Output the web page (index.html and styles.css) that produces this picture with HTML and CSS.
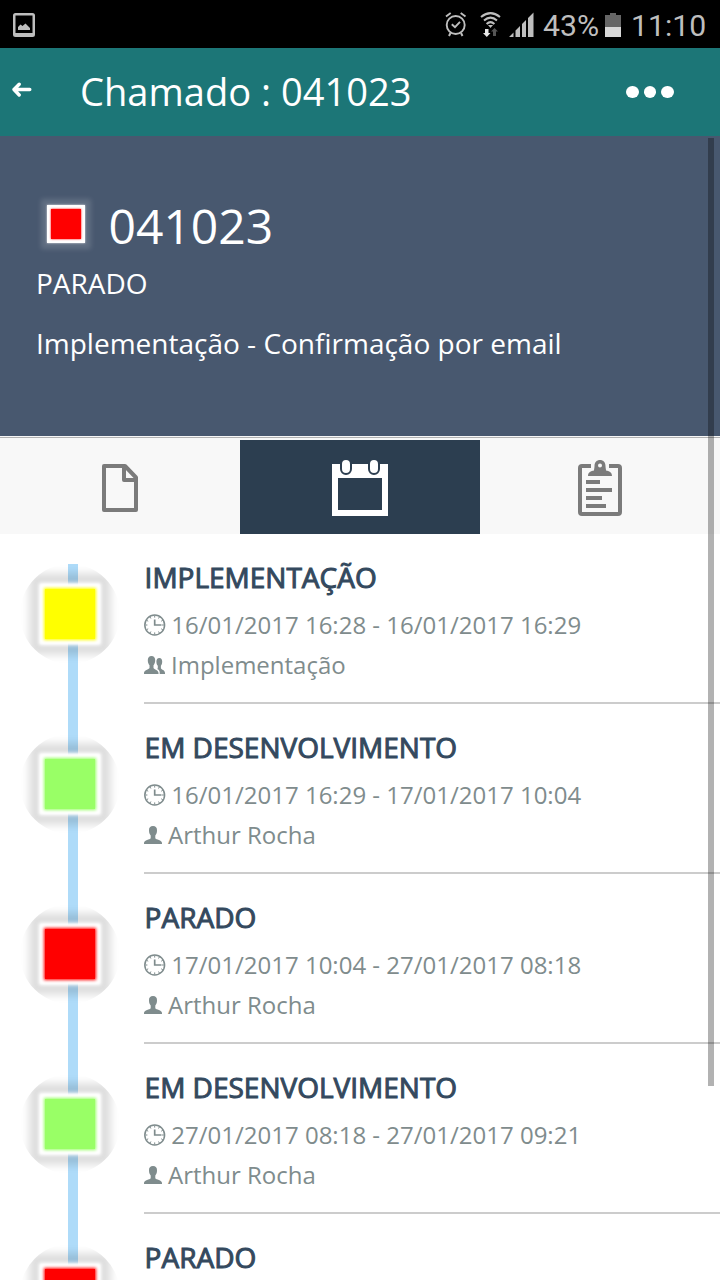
FILE: index.html
```html
<!DOCTYPE html>
<html lang="pt-BR">
<head>
    <meta charset="UTF-8" />
    <meta name="viewport" content="width=device-width, initial-scale=1.0"/>
    <title>Chamado : 041023</title>
    <link rel="stylesheet" href="styles.css">
</head>
<body>

    <svg class="symbols" width="0" height="0">
        <symbol id="clock" viewBox="0 0 22 22">
            <circle cx="10.7" cy="11" r="9.9" fill="none" stroke="currentColor" stroke-width="1.5"/>
            <path d="M10.7 5.5V11H17.5" fill="none" stroke="currentColor" stroke-width="1.7"/>
            <path d="M10.7 1.5V3.6M10.7 18.4V20.5M1.3 11H3.4M18 11H20.1M6 2.9l.9 1.6M2.6 6.3l1.6.9M15.4 2.9l-.9 1.6M18.8 6.3l-1.6.9M6 19.1l.9-1.6M2.6 15.7l1.6-.9M15.4 19.1l-.9-1.6M18.8 15.7l-1.6-.9" stroke="currentColor" stroke-width="1"/>
        </symbol>
        <symbol id="person" viewBox="0 0 18 18">
            <path d="M9 0C11.700 0 13.200 1.600 13 4.500C13 7 12.200 8.300 11.300 9.500V12.300C12 13.700 18 14 18 17V18H0V17C0 14 6 13.700 6.700 12.300V9.500C5.800 8.300 5 7 5 4.500C4.800 1.600 6.300 0 9 0Z" fill="currentColor"/>
        </symbol>
        <symbol id="people" viewBox="0 0 21 18">
            <path d="M7.500 0C10 0 11.200 1.600 11.200 4.300C11.200 6.800 10.300 8.300 9.500 9.300V12C10.200 13.500 14.500 14 14.500 17V18H0V17C0 14 4.800 13.500 5.500 12V9.300C4.700 8.300 3.800 6.800 3.800 4.300C3.800 1.600 5 0 7.500 0Z" fill="currentColor"/>
            <path d="M15.300 2C17.300 2 18.200 3.500 18.200 5.600C18.200 7.800 17.500 9 16.900 9.800V12.200C17.500 13.700 21 14 21 17V18H15.700V16.500C15.700 14.600 14.700 13.800 13.200 13L13.800 12.200V9.800C13 9 12.400 7.800 12.400 5.600C12.400 3.500 13.300 2 15.300 2Z" fill="currentColor"/>
        </symbol>
    </svg>

    <div class="status-bar">
        <svg class="ic-photo" width="22" height="24" viewBox="0 0 22 24">
            <path d="M2.500 0H19.500Q22 0 22 2.500V21.500Q22 24 19.500 24H2.500Q0 24 0 21.500V2.500Q0 0 2.500 0ZM2.500 2.500V20H19.500V2.500Z" fill="#bebebe" fill-rule="evenodd"/>
            <path d="M5 17V14L7.500 11.500L9.500 13L12.500 10.500L17 15V17Z" fill="#bebebe"/>
        </svg>
        <svg class="ic-alarm" width="22" height="25" viewBox="0 0 22 25" fill="none" stroke="#bebebe">
            <circle cx="10.700" cy="13" r="9" stroke-width="1.900"/>
            <path d="M1 4.500L5.700 1M20.500 4.500L15.700 1" stroke-width="1.900"/>
            <path d="M6.800 12.200L10 15.200L15 9.800" stroke-width="1.900"/>
            <path d="M5.500 21L4 24M16 21L17.500 24" stroke-width="2"/>
        </svg>
        <svg class="ic-wifi" width="22" height="25" viewBox="0 0 22 25" fill="none" stroke="#bebebe" stroke-width="2">
            <path d="M1 5Q10.500 -2.800 20 5M4 8.500Q10.500 2.800 17 8.500M6.600 12Q10.500 8.300 14.400 12"/>
            <path d="M8 13H13L10.500 16Z" fill="#bebebe" stroke="none"/>
            <path d="M5 17H8.500V21H10.500L6.800 25L3 21H5Z" fill="#e8e8e8" stroke="none"/>
            <path d="M13 24V19.500H11L14.500 16L18 19.500H16V24Z" fill="#555" stroke="none"/>
        </svg>
        <svg class="ic-signal" width="25" height="25" viewBox="0 0 25 25" fill="#bebebe">
            <path d="M0 25L4.500 20.500V25ZM6.500 25V18.500L11 14V25ZM13 25V12L17 8V25ZM19 25V6L24.500 .5V25Z"/>
        </svg>
        <span class="percent">43%</span>
        <svg class="ic-battery" width="16" height="24" viewBox="0 0 16 24">
            <path d="M5 0H11V2H16V14H0V2H5Z" fill="#666"/>
            <path d="M0 14H16V24H0Z" fill="#d8d8d8"/>
        </svg>
        <span class="time">11:10</span>
    </div>

    <header class="header">
        <svg width="20" height="16" viewBox="0 0 20 16" fill="none" stroke="#fff" stroke-width="3.400" stroke-linecap="round" stroke-linejoin="round">
            <path d="M7.200 2.200L2 7.500L7.200 13M2.500 7.500H17.800"/>
        </svg>
        <h1>Chamado : 041023</h1>
        <div class="more"><i></i><i></i><i></i></div>
    </header>

    <section class="summary">
        <div class="summary-title">
            <span class="flag"></span>
            <h2>041023</h2>
        </div>
        <p class="state">PARADO</p>
        <p>Implementação - Confirmação por email</p>
    </section>

    <nav class="tabs">
        <a class="tab">
            <svg width="36" height="48" viewBox="0 0 36 48" fill="none" stroke="#7b7b7b" stroke-width="4" stroke-linejoin="round">
                <path d="M2 2H23L34 13.500V46H2Z"/>
                <path d="M22 2V16H34"/>
            </svg>
        </a>
        <a class="tab active">
            <svg width="56" height="56" viewBox="0 0 56 56">
                <path d="M0 4H56V56H0ZM6 18V50H50V18Z" fill="#fff" fill-rule="evenodd"/>
                <rect x="9" y="-1" width="10" height="15" rx="5" fill="#fff" stroke="#2c3e50" stroke-width="2"/>
                <rect x="37" y="-1" width="10" height="15" rx="5" fill="#fff" stroke="#2c3e50" stroke-width="2"/>
            </svg>
        </a>
        <a class="tab">
            <svg width="44" height="56" viewBox="0 0 44 56">
                <path d="M13 6H4Q2 6 2 8V52Q2 54 4 54H40Q42 54 42 52V8Q42 6 40 6H31" fill="none" stroke="#7b7b7b" stroke-width="4"/>
                <path d="M10 16C10 12 13 11 16 10.500C16 9 16.500 8 16.500 6C16.500 2 19 0 22 0S27.500 2 27.500 6C27.500 8 28 9 28 10.500C31 11 34 12 34 16ZM22 3.500A2 2 0 1 0 22 7.500A2 2 0 1 0 22 3.500Z" fill="#7b7b7b" fill-rule="evenodd"/>
                <path d="M8 20H22V24H8ZM8 28H34V32H8ZM8 36H24V40H8ZM8 44H28V48H8Z" fill="#7b7b7b"/>
            </svg>
        </a>
    </nav>

    <main class="timeline">
        <article class="item">
            <div class="track"><span class="marker yellow"></span></div>
            <div class="info">
                <h3>IMPLEMENTAÇÃO</h3>
                <p><svg width="22" height="22"><use href="#clock"/></svg>16/01/2017 16:28 - 16/01/2017 16:29</p>
                <p><svg width="21" height="18"><use href="#people"/></svg>Implementação</p>
            </div>
        </article>
        <article class="item">
            <div class="track"><span class="marker green"></span></div>
            <div class="info">
                <h3>EM DESENVOLVIMENTO</h3>
                <p><svg width="22" height="22"><use href="#clock"/></svg>16/01/2017 16:29 - 17/01/2017 10:04</p>
                <p><svg width="18" height="18"><use href="#person"/></svg>Arthur Rocha</p>
            </div>
        </article>
        <article class="item">
            <div class="track"><span class="marker red"></span></div>
            <div class="info">
                <h3>PARADO</h3>
                <p><svg width="22" height="22"><use href="#clock"/></svg>17/01/2017 10:04 - 27/01/2017 08:18</p>
                <p><svg width="18" height="18"><use href="#person"/></svg>Arthur Rocha</p>
            </div>
        </article>
        <article class="item">
            <div class="track"><span class="marker green"></span></div>
            <div class="info">
                <h3>EM DESENVOLVIMENTO</h3>
                <p><svg width="22" height="22"><use href="#clock"/></svg>27/01/2017 08:18 - 27/01/2017 09:21</p>
                <p><svg width="18" height="18"><use href="#person"/></svg>Arthur Rocha</p>
            </div>
        </article>
        <article class="item">
            <div class="track"><span class="marker red"></span></div>
            <div class="info">
                <h3>PARADO</h3>
            </div>
        </article>
    </main>

    <div class="scrollbar"></div>

</body>
</html>
```
FILE: styles.css
```css
* {
    box-sizing: border-box;
}

body {
    margin: 0;
    height: 1280px;
    overflow: hidden;
    display: flex;
    flex-direction: column;
    background: #fff;
    font-family: 'Open Sans', sans-serif;
}

h1, h2, h3, p {
    margin: 0;
    font-weight: 400;
    white-space: nowrap;
}

svg {
    display: block;
    flex: none;
}

.symbols {
    position: absolute;
}

/* phone status bar */
.status-bar {
    flex: none;
    display: flex;
    align-items: center;
    height: 48px;
    padding: 0 14px 0 13px;
    background: #000;
    color: #bebebe;
    font: 30.2px/48px Roboto, sans-serif;
}

.ic-photo {
    margin: 2px auto 0 0;
}

.ic-alarm {
    margin-right: 13px;
}

.ic-wifi {
    margin-right: 7px;
}

.ic-signal {
    margin-right: 9px;
}

.percent {
    width: 62px;
    padding-top: 3px;
}

.ic-battery {
    margin-right: 10px;
    margin-top: 1px;
}

.time {
    width: 75px;
    padding-top: 3px;
}

.header {
    flex: none;
    display: flex;
    align-items: center;
    height: 88px;
    padding: 0 46px 0 12px;
    background: #1c7677;
    color: #fff;
}

.header svg {
    margin-top: -5px;
}

.header h1 {
    margin: -2px 0 0 48px;
    font-size: 38.1px;
}

.more {
    display: flex;
    gap: 5px;
    margin-left: auto;
}

.more i {
    width: 12.6px;
    height: 12px;
    border-radius: 50%;
    background: #fff;
}

.summary {
    flex: none;
    height: 300px;
    padding: 56px 36px 0;
    background: #48586f;
    color: #fff;
    font-size: 28px;
    line-height: 40px;
}

.summary-title {
    display: flex;
    height: 71px;
}

.summary h2 {
    margin-left: 23.5px;
    font-size: 48px;
    line-height: 68px;
}

.flag {
    display: flex;
    width: 38px;
    height: 38px;
    margin: 13px 0 0 11px;
    padding: 4px;
    background: #fff;
    box-shadow: 0 0 2px rgba(255, 255, 255, 0.8), 0 0 5px 6px rgba(255, 255, 255, 0.14);
}

.flag::before {
    content: "";
    flex: 1;
    background: #f00;
    box-shadow: 0 0 2px #f00;
}

.summary .state {
    margin-bottom: 20px;
}

.tabs {
    flex: none;
    display: flex;
    height: 98px;
    padding-top: 2px;
    border-top: 1px solid #f7f7f7;
    background: linear-gradient(#b2b2b2 1px, #f8f8f8 1px);
}

.tab {
    flex: 1;
    display: flex;
    align-items: center;
    justify-content: center;
    margin-top: 1px;
}

.tab.active {
    background: #2c3e50;
}

.tab svg {
    margin-top: 2px;
}

/* timeline */
.timeline {
    flex: 1;
    min-height: 0;
    overflow: hidden;
    padding-top: 30px;
}

.item {
    display: flex;
    height: 170px;
}

.track {
    width: 144px;
    padding-left: 20px;
    background: linear-gradient(#aedbf9, #aedbf9) 68px 0 / 10px 100% no-repeat;
}

/* the halo fades out before it reaches the circle's edge */
.marker {
    display: flex;
    align-items: center;
    justify-content: center;
    width: 100px;
    height: 100px;
    border-radius: 50%;
    overflow: hidden;
}

.marker::before {
    content: "";
    width: 50px;
    height: 50px;
    background: currentColor;
    box-shadow: 0 0 3px 1px currentColor, 0 0 4px 6px #fff, 0 0 2px 5px #fff, 0 0 8px 16px rgba(0, 0, 0, 0.135);
}

.yellow {
    color: #ff0;
}

.green {
    color: #9f6;
}

.red {
    color: #f00;
}

.info {
    flex: 1;
    height: 140px;
    border-bottom: 2px solid #ccc;
    color: #7f8c8d;
    font-size: 24px;
}

.info h3 {
    height: 41px;
    padding-left: 0.6px;
    color: #34495e;
    font-size: 28px;
    line-height: 26px;
    -webkit-text-stroke: 1px #34495e;
}

.info p {
    display: flex;
    align-items: center;
    gap: 6px;
    height: 40px;
    padding-bottom: 2px;
}

.info p svg {
    margin-top: 2px;
}

/* clock glyph has a wider right bearing */
.info h3 + p {
    gap: 5.3px;
}

.scrollbar {
    position: absolute;
    top: 138px;
    right: 6px;
    width: 6px;
    height: 948px;
    background: rgba(0, 0, 0, 0.3);
}
```
